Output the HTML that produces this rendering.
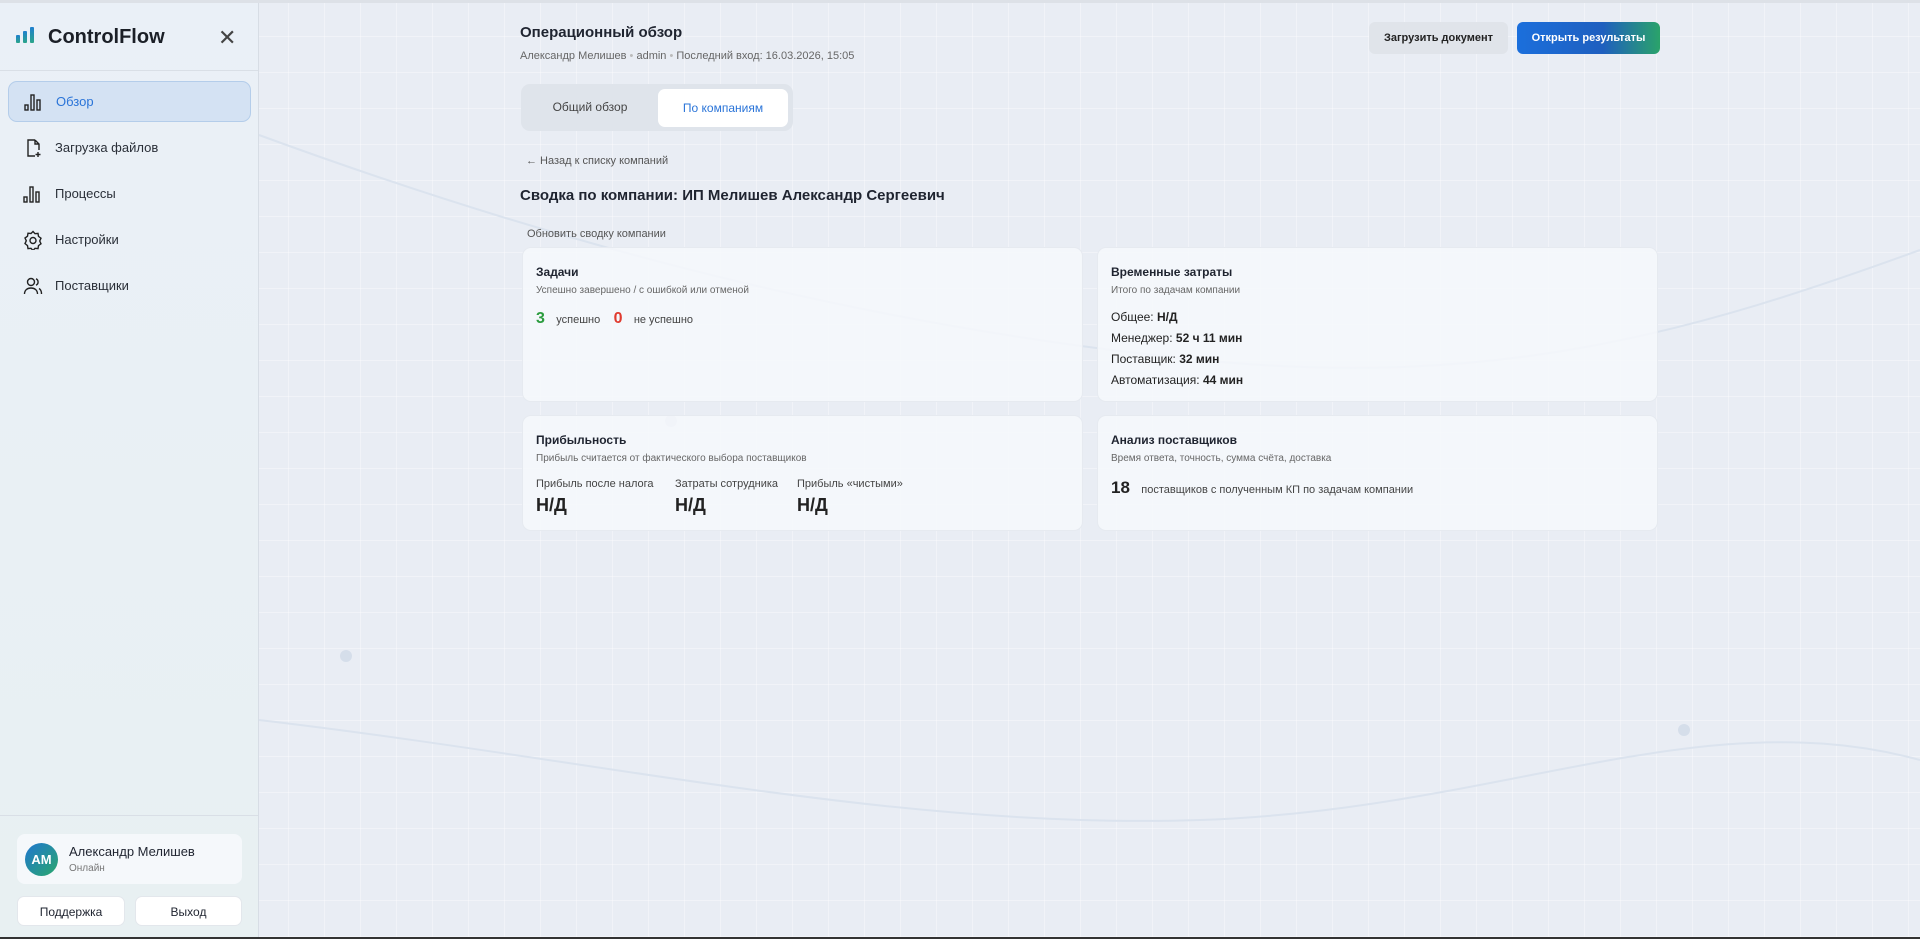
<!DOCTYPE html>
<html><head><meta charset="utf-8"><style>
*{box-sizing:border-box;margin:0;padding:0}
body{width:1920px;height:939px;overflow:hidden;font-family:"Liberation Sans","Noto Sans CJK SC",sans-serif;color:#1f2430;background:#e9edf4;position:relative;
background-image:linear-gradient(rgba(255,255,255,.35) 1px,transparent 1px),linear-gradient(90deg,rgba(255,255,255,.35) 1px,transparent 1px);background-size:36px 36px}
.topline{position:absolute;left:0;top:0;width:1920px;height:3px;background:#dde1e7}
.botline{position:absolute;left:0;bottom:0;width:1920px;height:2px;background:#333}
.side{position:absolute;left:0;top:3px;width:259px;height:934px;background:linear-gradient(180deg,#eaf0f7,#e8f0f2);border-right:1px solid #d7dde5;z-index:2}
.logo{position:absolute;left:16px;top:24px;display:flex;align-items:flex-end;gap:3px}
.logo i{display:block;width:4px;background:linear-gradient(#1f7fcf,#2aa58a);border-radius:1px}
.brand{position:absolute;left:48px;top:23px;font-size:20px;font-weight:bold;color:#1b1f27}
.close{position:absolute;left:218px;top:24px;font-size:22px;color:#444;line-height:1}
.hsep{position:absolute;left:0;top:67px;width:258px;height:1px;background:#d9dfe6}
.nav{position:absolute;left:8px;width:243px;height:41px;border-radius:9px;display:flex;align-items:center;padding-left:15px;font-size:13px;color:#2a2f38}
.nav svg{width:20px;height:20px;margin-right:12px}
.nav.act{background:#d4e2f3;border:1px solid #b4cdea;color:#2a74d8}
.bsep{position:absolute;left:0;top:812px;width:258px;height:1px;background:#d9dfe6}
.user{position:absolute;left:17px;top:831px;width:225px;height:50px;background:#f5f8fb;border-radius:8px}
.av{position:absolute;left:8px;top:9px;width:33px;height:33px;border-radius:50%;background:linear-gradient(135deg,#1f76d0,#2aa86c);color:#fff;font-weight:bold;font-size:13px;text-align:center;line-height:33px}
.un{position:absolute;left:52px;top:10px;font-size:13px;color:#1f2430}
.us{position:absolute;left:52px;top:29px;font-size:10px;color:#777}
.sb{position:absolute;top:893px;height:30px;background:#fff;border-radius:7px;font-size:12px;text-align:center;line-height:30px;color:#1f2430;border:1px solid #e3e7ec}
.t1{position:absolute;left:520px;top:24px;font-size:15px;font-weight:bold}
.t2{position:absolute;left:520px;top:50px;font-size:11px;color:#666}
.btn{position:absolute;top:22px;height:32px;border-radius:6px;font-size:11px;font-weight:bold;line-height:32px;text-align:center}
.tabs{position:absolute;left:521px;top:84px;width:272px;height:47px;background:#dfe4eb;border-radius:9px}
.tab{position:absolute;font-size:12px;line-height:40px;text-align:center}
.s11{position:absolute;font-size:11px;color:#555}
.h2{position:absolute;left:520px;top:187px;font-size:15px;font-weight:bold}
.card{position:absolute;background:rgba(246,248,252,.85);border-radius:9px;border:1px solid #e6eaf0}
.ct{position:absolute;left:13px;font-size:12px;font-weight:bold}
.cs{position:absolute;left:13px;font-size:10px;color:#666}
.ln{position:absolute;left:13px;font-size:12px;color:#222}
.ln b{font-weight:bold}
</style></head><body>
<svg style="position:absolute;left:0;top:0" width="1920" height="939" fill="none" stroke="#dbe3ee" stroke-width="2">
<path d="M259 135C600 260 900 330 1200 360S1700 330 1920 250"/>
<path d="M259 720C600 760 900 830 1200 820S1700 700 1920 760"/>
<circle cx="346" cy="656" r="6" fill="#d5deea" stroke="none"/>
<circle cx="1684" cy="730" r="6" fill="#d5deea" stroke="none"/>
<circle cx="671" cy="421" r="6" fill="#d5deea" stroke="none"/>
</svg>
<div class="topline"></div>
<div class="side">
<div class="logo" style="top:24px"><i style="height:8px"></i><i style="height:12px"></i><i style="height:16px"></i></div>
<div class="brand">ControlFlow</div>
<div class="close">✕</div>
<div class="hsep"></div>
<div class="nav act" style="top:78px"><svg viewBox="0 0 20 20" fill="none" stroke="#222" stroke-width="1.4"><rect x="1" y="13" width="3" height="5"/><rect x="7" y="3" width="3" height="15"/><rect x="13" y="8" width="3" height="10"/></svg>Обзор</div>
<div class="nav" style="top:124px"><svg viewBox="0 0 20 20" fill="none" stroke="#222" stroke-width="1.4"><path d="M12 2H5v16h7M12 2l4 4v6M12 2v4h4M15 14v5M12.5 16.5h5"/></svg>Загрузка файлов</div>
<div class="nav" style="top:170px"><svg viewBox="0 0 20 20" fill="none" stroke="#222" stroke-width="1.4"><rect x="1" y="13" width="3" height="5"/><rect x="7" y="3" width="3" height="15"/><rect x="13" y="8" width="3" height="10"/></svg>Процессы</div>
<div class="nav" style="top:216px"><svg viewBox="0 0 20 20" fill="none" stroke="#222" stroke-width="1.4"><path d="M10 1.5l2 2.2 3-.3.5 3 2.5 1.8-1.3 2.8 1.3 2.8-2.5 1.8-.5 3-3-.3-2 2.2-2-2.2-3 .3-.5-3L2 13.6l1.3-2.8L2 8l2.5-1.8.5-3 3 .3z"/><circle cx="10" cy="10.5" r="3"/></svg>Настройки</div>
<div class="nav" style="top:262px"><svg viewBox="0 0 20 20" fill="none" stroke="#222" stroke-width="1.4"><circle cx="8" cy="6" r="3.5"/><path d="M1.5 18c0-4 3-6 6.5-6s6.5 2 6.5 6M13 2.8a3.5 3.5 0 010 6.4M16 12.5c1.5.8 2.5 2.8 2.5 5.5"/></svg>Поставщики</div>
<div class="bsep"></div>
<div class="user"><div class="av">AM</div><div class="un">Александр Мелишев</div><div class="us">Онлайн</div></div>
<div class="sb" style="left:17px;width:108px">Поддержка</div>
<div class="sb" style="left:135px;width:107px">Выход</div>
</div>
<div class="t1">Операционный обзор</div>
<div class="t2">Александр Мелишев <span style="color:#bbb">•</span> admin <span style="color:#bbb">•</span> Последний вход: 16.03.2026, 15:05</div>
<div class="btn" style="left:1369px;width:139px;background:#e0e4ea;color:#222">Загрузить документ</div>
<div class="btn" style="left:1517px;width:143px;background:linear-gradient(90deg,#1b6fdc,#1f5fbf 60%,#2aa36a);color:#fff">Открыть результаты</div>
<div class="tabs">
<div class="tab" style="left:0;width:138px;top:3px;color:#444">Общий обзор</div>
<div class="tab" style="left:137px;top:5px;width:130px;height:38px;background:#fff;border-radius:7px;line-height:38px;color:#2a74d8">По компаниям</div>
</div>
<div class="s11" style="left:526px;top:155px">← Назад к списку компаний</div>
<div class="h2">Сводка по компании: ИП Мелишев Александр Сергеевич</div>
<div class="s11" style="left:527px;top:228px">Обновить сводку компании</div>
<div class="card" style="left:522px;top:247px;width:561px;height:155px">
<div class="ct" style="top:17px">Задачи</div>
<div class="cs" style="top:37px">Успешно завершено / с ошибкой или отменой</div>
<div class="ln" style="top:62px"><b style="color:#2b9c3e;font-size:16px">3</b> <span style="font-size:11px;color:#444;margin:0 10px 0 8px">успешно</span> <b style="color:#e03a2e;font-size:16px">0</b> <span style="font-size:11px;color:#444;margin-left:8px">не успешно</span></div>
</div>
<div class="card" style="left:1097px;top:247px;width:561px;height:155px">
<div class="ct" style="top:17px">Временные затраты</div>
<div class="cs" style="top:37px">Итого по задачам компании</div>
<div class="ln" style="top:62px">Общее: <b>Н/Д</b></div>
<div class="ln" style="top:83px">Менеджер: <b>52 ч 11 мин</b></div>
<div class="ln" style="top:104px">Поставщик: <b>32 мин</b></div>
<div class="ln" style="top:125px">Автоматизация: <b>44 мин</b></div>
</div>
<div class="card" style="left:522px;top:415px;width:561px;height:116px">
<div class="ct" style="top:17px">Прибыльность</div>
<div class="cs" style="top:37px">Прибыль считается от фактического выбора поставщиков</div>
<div class="ln" style="top:62px;font-size:11px;color:#444">Прибыль после налога</div>
<div class="ln" style="top:62px;left:152px;font-size:11px;color:#444">Затраты сотрудника</div>
<div class="ln" style="top:62px;left:274px;font-size:11px;color:#444">Прибыль «чистыми»</div>
<div class="ln" style="top:79px;font-size:18px;font-weight:bold">Н/Д</div>
<div class="ln" style="top:79px;left:152px;font-size:18px;font-weight:bold">Н/Д</div>
<div class="ln" style="top:79px;left:274px;font-size:18px;font-weight:bold">Н/Д</div>
</div>
<div class="card" style="left:1097px;top:415px;width:561px;height:116px">
<div class="ct" style="top:17px">Анализ поставщиков</div>
<div class="cs" style="top:37px">Время ответа, точность, сумма счёта, доставка</div>
<div class="ln" style="top:62px"><b style="font-size:17px">18</b> <span style="font-size:11px;color:#444;margin-left:8px">поставщиков с полученным КП по задачам компании</span></div>
</div>
<div class="botline"></div>
</body></html>
